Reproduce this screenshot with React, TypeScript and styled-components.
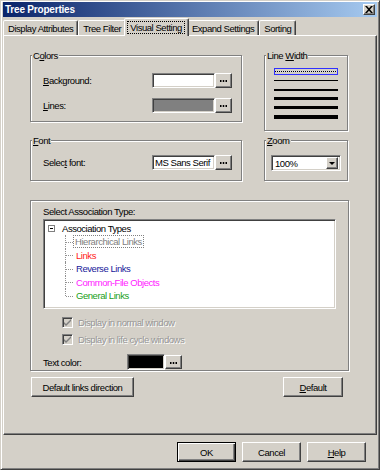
import React from 'react';
import styled, { createGlobalStyle } from 'styled-components';

const FONT = `"Liberation Sans", Arial, sans-serif`;
const FACE = '#d4d0c8';

const Global = createGlobalStyle`
  html, body { margin: 0; padding: 0; background: ${FACE}; }
  body { font-family: ${FONT}; font-size: 9.5px; letter-spacing: -0.45px; color: #000; }
  * { box-sizing: border-box; }
`;

const Window = styled.div`
  width: 380px;
  height: 470px;
  background: ${FACE};
  border: 1px solid;
  border-color: ${FACE} #404040 #404040 ${FACE};
  box-shadow: inset 1px 1px 0 #fff, inset -1px -1px 0 #808080;
  padding: 1px 2px 2px 2px;
  display: flex;
  flex-direction: column;
`;

const TitleBar = styled.div`
  height: 15px;
  flex: none;
  display: flex;
  align-items: center;
  justify-content: space-between;
  padding: 0 2px 0 2px;
  background: linear-gradient(to right, #0a246a, #a6caf0);
`;

const TitleText = styled.span`
  color: #fff;
  font-weight: bold;
  font-size: 10px;
  letter-spacing: -0.2px;
`;

const CloseButton = styled.div`
  width: 12px;
  height: 11px;
  background: ${FACE};
  border: 1px solid;
  border-color: #fff #404040 #404040 #fff;
  box-shadow: inset -1px -1px 0 #808080;
  display: flex;
  align-items: center;
  justify-content: center;
`;

const TabStrip = styled.div`
  height: 17px;
  margin-top: 1px;
  flex: none;
  display: flex;
  align-items: flex-end;
  position: relative;
  z-index: 1;
`;

const Tab = styled.div<{ $active?: boolean }>`
  height: ${p => (p.$active ? 18 : 15)}px;
  margin: 0 ${p => (p.$active ? -2 : 0)}px ${p => (p.$active ? -1 : 0)}px;
  padding: 0 ${p => (p.$active ? 3 : 4)}px 0 ${p => (p.$active ? 2 : 4)}px;
  background: ${FACE};
  border: 1px solid;
  border-bottom: none;
  border-color: #fff #404040 transparent #fff;
  border-radius: 2px 2px 0 0;
  box-shadow: inset -1px 0 0 #808080;
  display: flex;
  align-items: center;
  position: relative;
  z-index: ${p => (p.$active ? 2 : 1)};
  white-space: nowrap;
`;

const TabFocus = styled.span`
  border: 1px dotted #000;
  padding: 0 2px;
  line-height: 11px;
`;

const Panel = styled.div`
  height: 400px;
  flex: none;
  background: ${FACE};
  border: 1px solid;
  border-color: #fff #404040 #404040 #fff;
  box-shadow: inset -1px -1px 0 #808080;
  padding: 19px 26px 0 26px;
  display: flex;
  flex-direction: column;
`;

const TopGrid = styled.div`
  display: grid;
  grid-template-columns: 212px 84px;
  column-gap: 22px;
  row-gap: 9px;
  align-items: start;
`;

const Group = styled.div<{ $w?: number; $h: number; $mt?: number }>`
  position: relative;
  width: ${p => (p.$w ? `${p.$w}px` : 'auto')};
  height: ${p => p.$h}px;
  margin-top: ${p => p.$mt ?? 0}px;
  border: 1px solid #808080;
  box-shadow: inset 1px 1px 0 #fff, 1px 1px 0 #fff;
`;

const Legend = styled.span`
  position: absolute;
  top: -6px;
  left: 1px;
  padding: 0 1px 0 1px;
  line-height: 11px;
  background: ${FACE};
`;

const FieldRows = styled.div<{ $top: number; $gap: number }>`
  display: flex;
  flex-direction: column;
  gap: ${p => p.$gap}px;
  padding: ${p => p.$top}px 9px 0 12px;
`;

const FieldRow = styled.div`
  display: flex;
  align-items: center;
  justify-content: space-between;
  height: 15px;
`;

const Picker = styled.div`
  display: flex;
  align-items: center;
`;

const Sunken = styled.div<{ $w: number; $h: number; $bg: string }>`
  width: ${p => p.$w}px;
  height: ${p => p.$h}px;
  background: ${p => p.$bg};
  border: 1px solid;
  border-color: #808080 #fff #fff #808080;
  box-shadow: inset 1px 1px 0 #404040, inset -1px -1px 0 ${FACE};
  overflow: hidden;
  white-space: nowrap;
  display: flex;
  align-items: center;
  padding-left: 2px;
`;

const DotsButton = styled.div<{ $h?: number }>`
  width: 17px;
  height: ${p => p.$h ?? 15}px;
  background: ${FACE};
  border: 1px solid;
  border-color: #fff #404040 #404040 #fff;
  box-shadow: inset -1px -1px 0 #808080;
  display: flex;
  align-items: center;
  justify-content: center;
  padding-top: 1px;
`;

const LineList = styled.div`
  display: flex;
  flex-direction: column;
  padding: 11px 0 0 9px;
`;

const LineOption = styled.div<{ $selected?: boolean }>`
  width: 64px;
  height: 9px;
  display: flex;
  align-items: center;
  ${p =>
    p.$selected
      ? `outline: 1px solid #3030ff; outline-offset: -1px; height: 7px; margin: 1px 0;`
      : ''}
`;

const LineBar = styled.div<{ $t: number; $dotted?: boolean }>`
  width: 100%;
  height: ${p => p.$t}px;
  background: ${p =>
    p.$dotted ? 'repeating-linear-gradient(to right, #000 0 1px, #d8d8f0 1px 2px)' : '#000'};
  margin: 0 ${p => (p.$dotted ? 1 : 0)}px;
`;

const Select = styled.div`
  margin: 14px 0 0 6px;
  width: 70px;
  height: 16px;
  background: #fff;
  border: 1px solid;
  border-color: #808080 #fff #fff #808080;
  box-shadow: inset 1px 1px 0 #404040, inset -1px -1px 0 ${FACE};
  display: flex;
  align-items: center;
  justify-content: space-between;
  padding: 2px 2px 2px 3px;
`;

const DropButton = styled.div`
  width: 12px;
  height: 12px;
  background: ${FACE};
  border: 1px solid;
  border-color: #fff #404040 #404040 #fff;
  box-shadow: inset -1px -1px 0 #808080;
  display: flex;
  align-items: center;
  justify-content: center;
`;

const Arrow = styled.div`
  width: 0;
  height: 0;
  border-left: 3px solid transparent;
  border-right: 3px solid transparent;
  border-top: 3px solid #000;
`;

const AssocBody = styled.div`
  display: flex;
  flex-direction: column;
  padding: 5px 0 0 12px;
`;

const Caption = styled.div`
  line-height: 11px;
  height: 12px;
`;

const TreeBox = styled.div`
  width: 293px;
  height: 90px;
  margin-top: 1px;
  background: #fff;
  border: 1px solid;
  border-color: #808080 #fff #fff #808080;
  box-shadow: inset 1px 1px 0 #404040, inset -1px -1px 0 ${FACE};
  padding: 2px 2px;
`;

const TreeRoot = styled.div`
  height: 13px;
  display: flex;
  align-items: center;
`;

const Expander = styled.div`
  width: 7px;
  height: 7px;
  margin: 0 7px 0 2px;
  border: 1px solid #808080;
  display: flex;
  align-items: center;
  justify-content: center;
  &::before {
    content: '';
    width: 3px;
    height: 1px;
    background: #000;
  }
`;

const TreeChildren = styled.div`
  margin-left: 19px;
  display: flex;
  flex-direction: column;
`;

const TreeItem = styled.div<{ $color: string; $last?: boolean }>`
  position: relative;
  height: 13.5px;
  display: flex;
  align-items: center;
  padding-left: 11px;
  color: ${p => p.$color};
  white-space: nowrap;
  &::before {
    content: '';
    position: absolute;
    left: 0;
    top: 0;
    height: ${p => (p.$last ? '50%' : '100%')};
    border-left: 1px dotted #909090;
  }
  &::after {
    content: '';
    position: absolute;
    left: 1px;
    top: 50%;
    width: 7px;
    border-top: 1px dotted #909090;
  }
`;

const FocusText = styled.span`
  outline: 1px dotted #808080;
  padding: 0 1px;
  margin-left: -2px;
  line-height: 11px;
`;

const CheckRow = styled.div<{ $mt: number }>`
  display: flex;
  align-items: center;
  height: 11px;
  margin: ${p => p.$mt}px 0 0 19px;
  color: #969696;
  text-shadow: 1px 1px 0 #fff;
`;

const CheckBox = styled.div`
  width: 11px;
  height: 11px;
  margin-right: 5px;
  background: ${FACE};
  border: 1px solid;
  border-color: #808080 #fff #fff #808080;
  box-shadow: inset 1px 1px 0 #404040, inset -1px -1px 0 ${FACE};
  display: flex;
  align-items: center;
  justify-content: center;
`;

const ColorRow = styled.div`
  display: flex;
  align-items: center;
  margin-top: 9px;
  height: 16px;
`;

const ColorLabel = styled.span`
  width: 84px;
`;

const ButtonRow = styled.div`
  display: flex;
  justify-content: space-between;
  margin-top: 6px;
  padding: 0 7px 0 1px;
`;

const Button = styled.div<{ $w: number; $default?: boolean }>`
  width: ${p => p.$w}px;
  height: 20px;
  background: ${FACE};
  border: 1px solid;
  border-color: ${p => (p.$default ? '#000' : '#fff #404040 #404040 #fff')};
  box-shadow: ${p =>
    p.$default
      ? 'inset 1px 1px 0 #fff, inset -1px -1px 0 #404040, inset -2px -2px 0 #808080'
      : 'inset -1px -1px 0 #808080'};
  display: flex;
  align-items: center;
  justify-content: center;
  white-space: nowrap;
`;

const Footer = styled.div`
  display: flex;
  justify-content: flex-end;
  gap: 6px;
  margin-top: 7px;
  padding-right: 11px;
`;

const Check = () => (
  <svg width="7" height="7" viewBox="0 0 7 7">
    <path d="M0 3 L2 5 L7 0 L7 2 L2 7 L0 5 Z" fill="#808080" />
  </svg>
);

const Dots = () => (
  <svg width="7" height="2" viewBox="0 0 7 2">
    <rect x="0" y="0" width="1.5" height="2" fill="#000" />
    <rect x="2.75" y="0" width="1.5" height="2" fill="#000" />
    <rect x="5.5" y="0" width="1.5" height="2" fill="#000" />
  </svg>
);

export default function App() {
  return (
    <>
      <Global />
      <Window>
        <TitleBar>
          <TitleText>Tree Properties</TitleText>
          <CloseButton>
            <svg width="8" height="7" viewBox="0 0 8 7">
              <path d="M0 0h2l2 2.2L6 0h2L5 3.5 8 7H6L4 4.8 2 7H0l3-3.5z" fill="#000" />
            </svg>
          </CloseButton>
        </TitleBar>
        <TabStrip>
          <Tab>Display Attributes</Tab>
          <Tab>Tree Filter</Tab>
          <Tab $active>
            <TabFocus>Visual Setting</TabFocus>
          </Tab>
          <Tab>Expand Settings</Tab>
          <Tab>Sorting</Tab>
        </TabStrip>
        <Panel>
          <TopGrid>
            <Group $w={212} $h={67}>
              <Legend>
                C<u>o</u>lors
              </Legend>
              <FieldRows $top={17} $gap={10}>
                <FieldRow>
                  <span>
                    <u>B</u>ackground:
                  </span>
                  <Picker>
                    <Sunken $w={63} $h={15} $bg="#fff" />
                    <DotsButton>
                      <Dots />
                    </DotsButton>
                  </Picker>
                </FieldRow>
                <FieldRow>
                  <span>
                    <u>L</u>ines:
                  </span>
                  <Picker>
                    <Sunken $w={63} $h={15} $bg="#808080" />
                    <DotsButton>
                      <Dots />
                    </DotsButton>
                  </Picker>
                </FieldRow>
              </FieldRows>
            </Group>
            <Group $w={84} $h={76}>
              <Legend>
                Line <u>W</u>idth
              </Legend>
              <LineList>
                <LineOption $selected>
                  <LineBar $t={1} $dotted />
                </LineOption>
                <LineOption>
                  <LineBar $t={1} />
                </LineOption>
                <LineOption>
                  <LineBar $t={2} />
                </LineOption>
                <LineOption>
                  <LineBar $t={3} />
                </LineOption>
                <LineOption>
                  <LineBar $t={3} />
                </LineOption>
                <LineOption>
                  <LineBar $t={4} />
                </LineOption>
              </LineList>
            </Group>
            <Group $w={212} $h={41}>
              <Legend>
                <u>F</u>ont
              </Legend>
              <FieldRows $top={14} $gap={0}>
                <FieldRow>
                  <span>
                    Selec<u>t</u> font:
                  </span>
                  <Picker>
                    <Sunken $w={63} $h={15} $bg="#fff">
                      MS Sans Serif
                    </Sunken>
                    <DotsButton>
                      <Dots />
                    </DotsButton>
                  </Picker>
                </FieldRow>
              </FieldRows>
            </Group>
            <Group $w={84} $h={41}>
              <Legend>
                <u>Z</u>oom
              </Legend>
              <Select>
                <span>100%</span>
                <DropButton>
                  <Arrow />
                </DropButton>
              </Select>
            </Group>
          </TopGrid>
          <Group $w={319} $h={171} $mt={19}>
            <AssocBody>
              <Caption>Select Association Type:</Caption>
              <TreeBox>
                <TreeRoot>
                  <Expander />
                  Association Types
                </TreeRoot>
                <TreeChildren>
                  <TreeItem $color="#808080">
                    <FocusText>Hierarchical Links</FocusText>
                  </TreeItem>
                  <TreeItem $color="#ff2020">Links</TreeItem>
                  <TreeItem $color="#20209a">Reverse Links</TreeItem>
                  <TreeItem $color="#ff20ff">Common-File Objects</TreeItem>
                  <TreeItem $color="#20a020" $last>
                    General Links
                  </TreeItem>
                </TreeChildren>
              </TreeBox>
              <CheckRow $mt={8}>
                <CheckBox>
                  <Check />
                </CheckBox>
                Display in normal window
              </CheckRow>
              <CheckRow $mt={6}>
                <CheckBox>
                  <Check />
                </CheckBox>
                Display in life cycle windows
              </CheckRow>
              <ColorRow>
                <ColorLabel>Text color:</ColorLabel>
                <Sunken $w={38} $h={16} $bg="#000" />
                <DotsButton $h={14}>
                  <Dots />
                </DotsButton>
              </ColorRow>
            </AssocBody>
          </Group>
          <ButtonRow>
            <Button $w={103}>Default links direction</Button>
            <Button $w={60}>
              <span>
                <u>D</u>efault
              </span>
            </Button>
          </ButtonRow>
        </Panel>
        <Footer>
          <Button $w={59} $default>
            OK
          </Button>
          <Button $w={59}>Cancel</Button>
          <Button $w={59}>
            <span>
              <u>H</u>elp
            </span>
          </Button>
        </Footer>
      </Window>
    </>
  );
}
